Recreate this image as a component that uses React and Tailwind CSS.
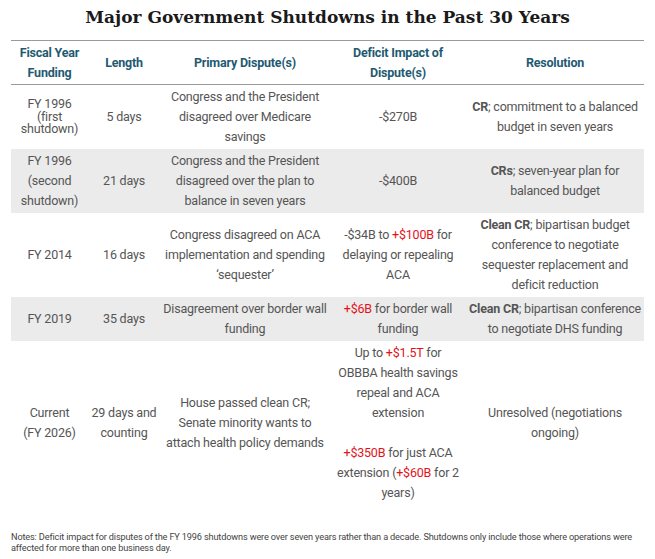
const rows = [
  {
    fy: (
      <span className="block leading-[12.5px]">
        FY 1996
        <br />
        (first
        <br />
        shutdown)
      </span>
    ),
    length: "5 days",
    dispute: "Congress and the President disagreed over Medicare savings",
    deficit: "-$270B",
    resolution: (
      <>
        <b className="font-bold">CR</b>; commitment to a balanced budget in seven years
      </>
    ),
    shaded: false,
  },
  {
    fy: (
      <>
        FY 1996
        <br />
        (second
        <br />
        shutdown)
      </>
    ),
    length: "21 days",
    dispute: "Congress and the President disagreed over the plan to balance in seven years",
    deficit: "-$400B",
    resolution: (
      <>
        <b className="font-bold">CRs</b>; seven-year plan for balanced budget
      </>
    ),
    shaded: true,
  },
  {
    fy: "FY 2014",
    length: "16 days",
    dispute: "Congress disagreed on ACA implementation and spending \u2018sequester\u2019",
    deficit: (
      <>
        -$34B to <span className="text-[#e3121b]">+$100B</span> for delaying or repealing ACA
      </>
    ),
    resolution: (
      <>
        <b className="font-bold">Clean CR</b>; bipartisan budget conference to negotiate sequester
        replacement and deficit reduction
      </>
    ),
    shaded: false,
  },
  {
    fy: "FY 2019",
    length: "35 days",
    dispute: "Disagreement over border wall funding",
    deficit: (
      <>
        <span className="text-[#e3121b]">+$6B</span> for border wall funding
      </>
    ),
    resolution: (
      <>
        <b className="font-bold">Clean CR</b>; bipartisan conference to negotiate DHS funding
      </>
    ),
    shaded: true,
  },
  {
    fy: (
      <>
        Current
        <br />
        (FY 2026)
      </>
    ),
    length: (
      <>
        29 days and
        <br />
        counting
      </>
    ),
    dispute: "House passed clean CR; Senate minority wants to attach health policy demands",
    deficit: (
      <>
        <p className="mb-5">
          Up to <span className="text-[#e3121b]">+$1.5T</span> for OBBBA health savings repeal and
          ACA extension
        </p>
        <p>
          <span className="text-[#e3121b]">+$350B</span> for just ACA extension (
          <span className="text-[#e3121b]">+$60B</span> for 2 years)
        </p>
      </>
    ),
    resolution: "Unresolved (negotiations ongoing)",
    shaded: false,
  },
];

const headers = [
  { label: "Fiscal Year Funding", w: "w-[77px]" },
  { label: "Length", w: "w-[72px]" },
  { label: "Primary Dispute(s)", w: "w-[170px]" },
  { label: "Deficit Impact of Dispute(s)", w: "w-[136px]" },
  { label: "Resolution", w: "" },
];

export default function App() {
  return (
    <div className="w-[655px] h-[559px] bg-white px-[11px] pt-[5px] font-['Roboto',sans-serif] text-[#555555]">
      <h1 className="text-center font-['DejaVu_Serif',serif] text-[17px] font-bold leading-[24px] text-[#1a1a1a]">
        Major Government Shutdowns in the Past 30 Years
      </h1>
      <table className="mt-[11px] w-full table-fixed border-collapse text-center text-[12.5px] leading-[20px] tracking-[-0.2px]">
        <thead>
          <tr className="border-y border-[#9a9a9a]">
            {headers.map((h) => (
              <th
                key={h.label}
                className={`${h.w} px-[3px] py-[1.5px] font-bold text-[#1f5a72] align-middle`}
              >
                {h.label}
              </th>
            ))}
          </tr>
        </thead>
        <tbody>
          {rows.map((r, i) => (
            <tr key={i} className={r.shaded ? "bg-[#ebebeb]" : "bg-white"}>
              <td className="px-[2px] py-[2px] align-middle">{r.fy}</td>
              <td className="px-[1px] py-[2px] align-middle">{r.length}</td>
              <td className="px-[2px] py-[2px] align-middle">{r.dispute}</td>
              <td className="px-[6px] py-[2px] align-middle">{r.deficit}</td>
              <td className="px-[2px] py-[2px] align-middle">{r.resolution}</td>
            </tr>
          ))}
        </tbody>
      </table>
      <p className="mt-[26px] text-[9.2px] leading-[11px] tracking-[-0.16px] text-[#444444]">
        Notes: Deficit impact for disputes of the FY 1996 shutdowns were over seven years rather than
        a decade. Shutdowns only include those where operations were affected for more than one
        business day.
      </p>
    </div>
  );
}
